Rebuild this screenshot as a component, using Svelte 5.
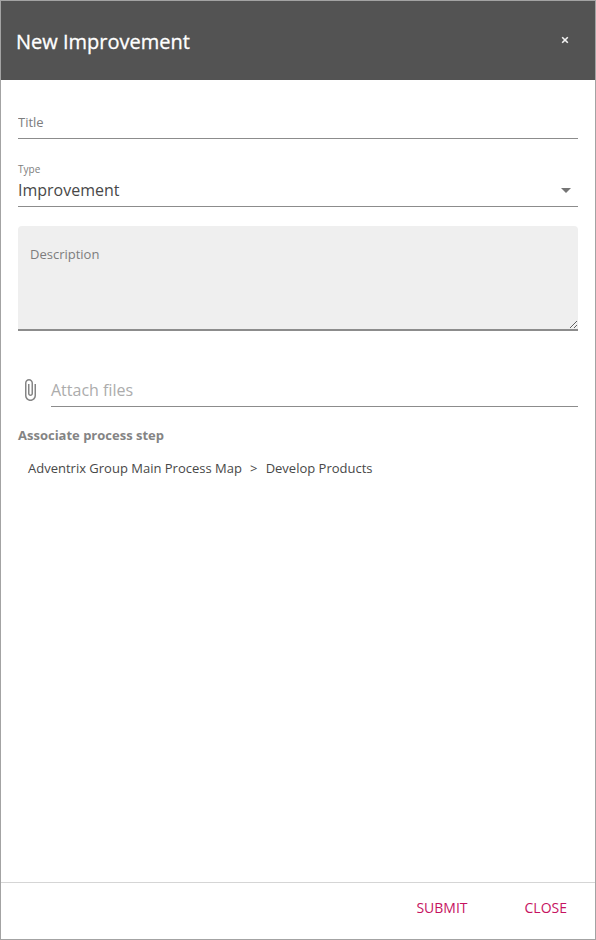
<script>
  let title = $state('');
  let description = $state('');
  const steps = ['Adventrix Group Main Process Map', 'Develop Products'];
</script>

<div class="dialog">
  <header>
    <h1>New Improvement</h1>
    <button class="dismiss" aria-label="Dismiss">
      <svg width="8" height="8" viewBox="0 0 8 8"><path d="M1.2 1.2L6.8 6.8M6.8 1.2L1.2 6.8" stroke="#f4f4f4" stroke-width="1.6" fill="none" /></svg>
    </button>
  </header>

  <main>
    <div class="field title">
      <input placeholder="Title" aria-label="Title" bind:value={title} />
    </div>

    <div class="field type">
      <span class="label">Type</span>
      <div class="select">
        <span>Improvement</span>
        <svg width="24" height="24" viewBox="0 0 24 24"><path d="M7 10l5 5 5-5z" fill="#757575" /></svg>
      </div>
    </div>

    <textarea placeholder="Description" aria-label="Description" bind:value={description}></textarea>

    <div class="attach">
      <svg width="24" height="24" viewBox="0 0 24 24"><path fill="#858585" d="M16.5 6v11.5c0 2.21-1.79 4-4 4s-4-1.79-4-4V5c0-1.38 1.12-2.5 2.5-2.5s2.5 1.12 2.5 2.5v10.5c0 .55-.45 1-1 1s-1-.45-1-1V6H10v9.5c0 1.38 1.12 2.5 2.5 2.5s2.5-1.12 2.5-2.5V5c0-2.21-1.79-4-4-4S7 2.79 7 5v12.5c0 3.04 2.46 5.5 5.5 5.5s5.5-2.46 5.5-5.5V6h-1.5z" /></svg>
      <div class="files">Attach files</div>
    </div>

    <h2>Associate process step</h2>
    <nav>
      <span>{steps[0]}</span><span class="sep">&gt;</span><span>{steps[1]}</span>
    </nav>
  </main>

  <footer>
    <button class="submit">SUBMIT</button>
    <button class="close">CLOSE</button>
  </footer>
</div>

<style>
  .dialog, .dialog * { box-sizing: border-box; }
  .dialog {
    width: 596px; height: 940px; border: 1px solid #a3a3a3; background: #fff;
    display: flex; flex-direction: column; overflow: hidden;
    font-family: "Open Sans", "Noto Sans", sans-serif; color: #484848;
  }
  header {
    height: 79px; flex: none; background: #535353; color: #fff;
    display: flex; justify-content: space-between; align-items: center; padding: 0 26px 0 15px;
  }
  h1 { margin: 3px 0 0; font-size: 20px; line-height: 28px; font-weight: 400; -webkit-text-stroke: 0.3px #fff; }
  button { border: 0; background: none; padding: 0; font: inherit; }
  .dismiss { display: flex; margin-bottom: 2px; }
  main { flex: 1; padding: 0 17px; display: flex; flex-direction: column; }
  .field { border-bottom: 1px solid #8c8c8c; flex: none; }
  .title { height: 32px; margin-top: 27px; }
  input, textarea { font-family: inherit; font-size: 13px; line-height: 20px; color: #484848; outline: 0; }
  input { display: block; width: 100%; height: 31px; border: 0; padding: 0 0 1px; background: none; }
  input::placeholder, textarea::placeholder { color: #7d7d7d; opacity: 1; }
  .type { height: 45px; margin-top: 23px; }
  .label { display: block; font-size: 10px; line-height: 14px; color: #7d7d7d; }
  .select { height: 24px; font-size: 16px; line-height: 24px; display: flex; justify-content: space-between; margin-top: 2px; }
  .select svg { flex: none; }
  textarea {
    display: block; flex: none; width: 560px; height: 105px; margin: 19px 0 0; padding: 18px 12px;
    background: #efefef; border: 0; border-bottom: 2px solid #8c8c8c; border-radius: 4px 4px 0 0; resize: vertical;
  }
  .attach { display: flex; margin-top: 43px; height: 33px; gap: 9px; }
  .attach svg { flex: none; margin-top: 4px; }
  .files { flex: 1; border-bottom: 1px solid #8c8c8c; font-size: 16px; line-height: 32px; color: #acacac; }
  h2 { margin: 18px 0 0; font-size: 13px; line-height: 20px; font-weight: 700; color: #848484; }
  nav { margin: 13px 0 0 10px; font-size: 13px; line-height: 20px; display: flex; }
  .sep { margin: 0 8.3px 0 8px; }
  footer { height: 57px; flex: none; border-top: 1px solid #d5d5d5; display: flex; justify-content: flex-end; padding: 0 28px 7px 0; gap: 57px; }
  footer button { color: #c6125f; font-size: 14px; line-height: 20px; }
</style>
